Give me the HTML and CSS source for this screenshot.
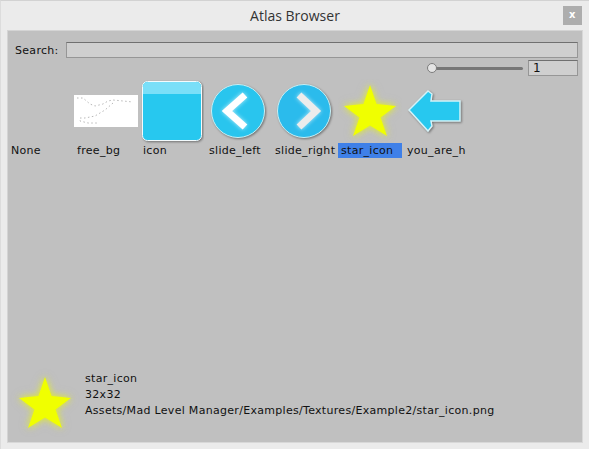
FILE: index.html
```html
<!DOCTYPE html>
<html>
<head>
  <title>Atlas Browser</title>
  <link rel="stylesheet" href="styles.css">
</head>
<body>
  <svg class="defs" width="0" height="0">
    <symbol id="star" viewBox="0 0 64 64">
      <polygon points="32,6 38.5,25 58,27 42.5,38.5 49,57 32,46.5 15,57 21.5,38.5 6,27 25.5,25"/>
    </symbol>
  </svg>

  <div class="titlebar">
    <div class="title">Atlas Browser</div>
    <div class="close">x</div>
  </div>

  <div class="panel">
    <div class="search-row">
      <label class="search-label">Search:</label>
      <div class="field search-field"></div>
    </div>
    <div class="zoom-row">
      <div class="slider">
        <div class="slider-thumb"></div>
      </div>
      <div class="field zoom-field">1</div>
    </div>

    <div class="gallery">
      <div class="cell">
        <div class="thumb"></div>
        <div class="name">None</div>
      </div>
      <div class="cell">
        <div class="thumb">
          <svg width="64" height="64" viewBox="0 0 64 64">
            <rect x="0" y="16" width="64" height="32" fill="#fff"/>
            <path class="dots" d="M3 19 H9 L16 25 L21 27 L29 25 L34 22 L39 21 L59 23"/>
            <path class="dots" d="M39 24 L31 31 L21 37 L11 39 L6 39 L6 42 L14 44 L25 44"/>
          </svg>
        </div>
        <div class="name">free_bg</div>
      </div>
      <div class="cell">
        <div class="thumb">
          <svg class="shadow" width="64" height="64" viewBox="0 0 64 64">
            <rect x="2.5" y="2.5" width="59" height="59" rx="5" fill="#27c8ef" stroke="#f4fbfd"/>
            <path d="M3 15 V8 Q3 3 8 3 H56 Q61 3 61 8 V15 Z" fill="#7adff8"/>
          </svg>
        </div>
        <div class="name">icon</div>
      </div>
      <div class="cell">
        <div class="thumb">
          <svg class="shadow" width="64" height="64" viewBox="0 0 64 64">
            <circle cx="32" cy="32" r="26.5" fill="#29c5ee" stroke="#c8f0f5"/>
            <path class="chevron" d="M39 16 L21 32 L39 48" stroke="#fff"/>
          </svg>
        </div>
        <div class="name">slide_left</div>
      </div>
      <div class="cell">
        <div class="thumb">
          <svg class="shadow" width="64" height="64" viewBox="0 0 64 64">
            <circle cx="32" cy="32" r="26.5" fill="#2bbbec" stroke="#c8f0f5"/>
            <path class="chevron" d="M27 16 L44 32 L27 48" stroke="#ececec"/>
          </svg>
        </div>
        <div class="name">slide_right</div>
      </div>
      <div class="cell">
        <div class="thumb">
          <svg class="star" width="64" height="64"><use href="#star"/></svg>
        </div>
        <div class="name selected">star_icon</div>
      </div>
      <div class="cell cell-last">
        <div class="thumb">
          <svg class="shadow" width="64" height="64" viewBox="0 0 64 64">
            <polygon points="5,31 24,12 28,15 27,22 56,22 56,42 27,42 28,47 24,52" fill="#27c8ef" stroke="#d4f3f9" stroke-width="1.5"/>
          </svg>
        </div>
        <div class="name">you_are_here</div>
      </div>
    </div>

    <div class="details">
      <svg class="star" width="64" height="64"><use href="#star"/></svg>
      <div class="details-text">
        <div>star_icon</div>
        <div>32x32</div>
        <div>Assets/Mad Level Manager/Examples/Textures/Example2/star_icon.png</div>
      </div>
    </div>
  </div>
</body>
</html>
```

FILE: styles.css
```css
html, body {
  height: 100%;
}
body {
  margin: 0;
  box-sizing: border-box;
  display: flex;
  flex-direction: column;
  background-color: #ebebeb;
  border-top: 1px solid #d2d2d2;
  border-left: 1px solid #dcdcdc;
  font-family: "DejaVu Sans", sans-serif;
  font-size: 11px;
  letter-spacing: 0.3px;
  color: #111;
}
.defs {
  position: absolute;
}
.titlebar {
  height: 29px;
  flex-shrink: 0;
  display: flex;
  justify-content: center;
  align-items: center;
  position: relative;
}
.title {
  font-family: "Open Sans", sans-serif;
  font-size: 14px;
  letter-spacing: 0;
  color: #333;
}
.close {
  position: absolute;
  right: 7px;
  top: 5px;
  width: 19px;
  height: 19px;
  background-color: #adadad;
  color: #fff;
  font-weight: bold;
  font-size: 10px;
  line-height: 17px;
  text-align: center;
}
.panel {
  flex: 1;
  margin: 0 6px 6px 6px;
  background-color: #c0c0c0;
  border-top: 1px solid #d4d4d4;
  border-left: 1px solid #d4d4d4;
  border-right: 1px solid #d8d8d8;
  border-bottom: 1px solid #d8d8d8;
  display: flex;
  flex-direction: column;
  min-height: 0;
}
.search-row {
  display: flex;
  align-items: center;
  height: 16px;
  margin-top: 11px;
  padding: 0 4px 0 7px;
}
.search-label {
  width: 51px;
  flex-shrink: 0;
}
.field {
  box-sizing: border-box;
  background-color: #cfcfcf;
  border: 1px solid #969696;
  border-top-color: #707070;
}
.search-field {
  flex: 1;
  height: 16px;
}
.zoom-row {
  display: flex;
  align-items: center;
  justify-content: flex-end;
  height: 16px;
  margin-top: 2px;
  padding-right: 4px;
}
.slider {
  width: 91px;
  height: 3px;
  margin-right: 5px;
  background-color: #777;
  border-radius: 2px;
  display: flex;
  align-items: center;
}
.slider-thumb {
  box-sizing: border-box;
  width: 10px;
  height: 10px;
  margin-left: -5px;
  border-radius: 50%;
  background-color: #e4e4e4;
  border: 1px solid #7c7c7c;
}
.zoom-field {
  width: 50px;
  height: 16px;
  padding-left: 4px;
  font-size: 12px;
  line-height: 14px;
}
.gallery {
  display: flex;
  gap: 2px;
  margin-top: 3px;
}
.cell {
  width: 64px;
  overflow: hidden;
}
.cell-last {
  width: 62px;
}
.thumb {
  height: 64px;
}
.thumb svg {
  display: block;
}
.name {
  height: 15px;
  line-height: 15px;
  padding-left: 3px;
  white-space: nowrap;
  overflow: hidden;
}
.selected {
  background-color: #3f80e8;
}
.dots {
  fill: none;
  stroke: #b8b8b8;
  stroke-width: 1;
  stroke-dasharray: 1.5 2.5;
}
.shadow {
  filter: drop-shadow(1px 1px 1px rgba(60, 60, 60, 0.6));
}
.chevron {
  fill: none;
  stroke-width: 7;
  filter: drop-shadow(0 0 2px rgba(255, 255, 255, 0.7));
}
.star {
  fill: #f0ff00;
  filter: drop-shadow(0 0 3px rgba(225, 235, 40, 0.9)) drop-shadow(0 0 3px rgba(215, 225, 90, 0.5));
  flex-shrink: 0;
}
.details {
  margin-top: auto;
  margin-bottom: 7px;
  margin-left: 5px;
  display: flex;
  align-items: flex-start;
  gap: 8px;
}
.details-text {
  line-height: 16px;
  white-space: nowrap;
}
```
